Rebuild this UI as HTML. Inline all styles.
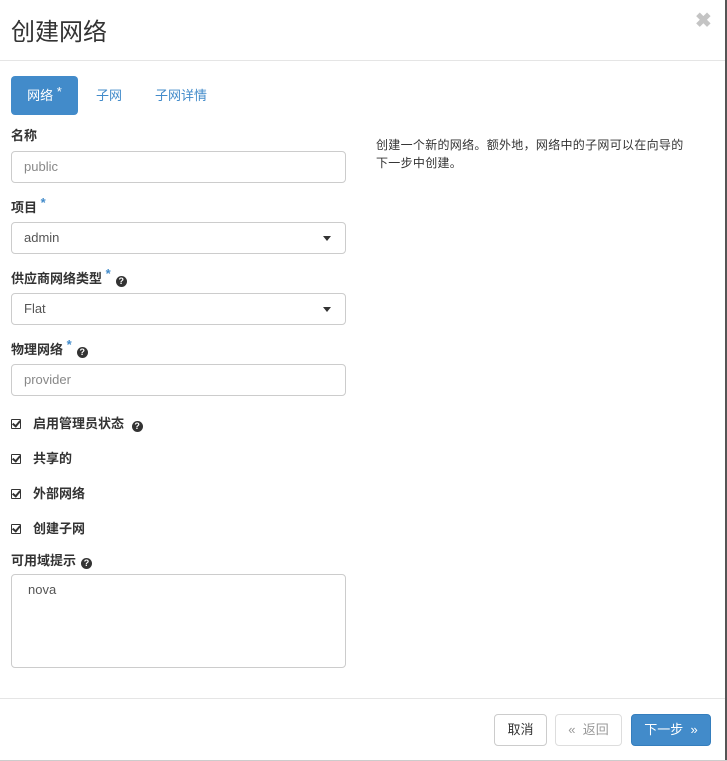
<!DOCTYPE html>
<html><head><meta charset="utf-8"><style>
*{box-sizing:border-box}
body{margin:0;width:727px;height:761px;background:#fff;font-family:"Liberation Sans","Noto Sans CJK SC",sans-serif;font-size:13px;color:#333;position:relative;overflow:hidden}
.edge{position:absolute;right:0;top:0;width:2px;height:761px;background:#555}
.edgeb{position:absolute;left:0;bottom:0;height:1px;width:727px;background:#ccc}
h1{position:absolute;left:11px;top:12px;margin:0;font-size:24px;font-weight:normal;color:#333}
.x{position:absolute;left:695px;top:8px;font-size:20px;color:#c4c4c4;font-weight:bold}
.hr{position:absolute;left:0;width:725px;height:1px;background:#e5e5e5}
.tab{position:absolute;top:76px;height:39px;line-height:39px;font-size:13px;color:#428bca}
.tab.a{left:11px;width:67px;background:#428bca;color:#fff;border-radius:4px;text-align:center}
.lbl{position:absolute;left:11px;font-weight:bold;font-size:13px;color:#333;line-height:16px}
.req{color:#428bca;font-size:13px;position:relative;top:-5px}
.q{display:inline-block;width:11px;height:11px;border-radius:50%;background:#333;color:#fff;font-size:9px;line-height:11px;text-align:center;font-weight:bold;margin-left:5px;vertical-align:-1px}
.inp{position:absolute;left:11px;width:335px;height:32px;border:1px solid #ccc;border-radius:4px;padding:0 12px;line-height:30px;color:#555;font-size:13px}
.inp.ph{color:#888}
.caret{position:absolute;right:14px;top:13px;width:0;height:0;border-left:4px solid transparent;border-right:4px solid transparent;border-top:5px solid #333}
.cb{position:absolute;left:11px;font-weight:bold;font-size:13px}
.cb .box{display:inline-block;width:10px;height:10px;border:1.5px solid #333;border-radius:1px;margin-right:12px;vertical-align:-1px;position:relative}
.cb .box:after{content:"";position:absolute;left:2px;top:-1px;width:3px;height:6px;border:solid #333;border-width:0 2px 2px 0;transform:rotate(40deg)}
.help{position:absolute;left:376px;top:136px;width:340px;line-height:18px;font-size:12px;color:#333;letter-spacing:0.3px}
.btn{position:absolute;top:714px;height:32px;border:1px solid #ccc;border-radius:4px;line-height:30px;text-align:center;font-size:13px;color:#333}
</style></head><body>
<div class="edge"></div><div class="edgeb"></div>
<h1>创建网络</h1><div class="x">✖</div>
<div class="hr" style="top:60px"></div>
<div class="tab a">网络 <span style="position:relative;top:-4px">*</span></div>
<div class="tab" style="left:96px">子网</div>
<div class="tab" style="left:155px">子网详情</div>
<div class="lbl" style="top:128px">名称</div>
<div class="inp ph" style="top:151px">public</div>
<div class="lbl" style="top:200px">项目 <span class="req">*</span></div>
<div class="inp" style="top:222px">admin<div class="caret"></div></div>
<div class="lbl" style="top:271px">供应商网络类型 <span class="req">*</span><span class="q">?</span></div>
<div class="inp" style="top:293px">Flat<div class="caret"></div></div>
<div class="lbl" style="top:342px">物理网络 <span class="req">*</span><span class="q">?</span></div>
<div class="inp ph" style="top:364px">provider</div>
<div class="cb" style="top:413px"><span class="box"></span>启用管理员状态 <span class="q" style="margin-left:4px">?</span></div>
<div class="cb" style="top:448px"><span class="box"></span>共享的</div>
<div class="cb" style="top:483px"><span class="box"></span>外部网络</div>
<div class="cb" style="top:518px"><span class="box"></span>创建子网</div>
<div class="lbl" style="top:553px">可用域提示<span class="q">?</span></div>
<div class="inp" style="top:574px;height:94px;padding:6px 16px;line-height:18px">nova</div>
<div class="help">创建一个新的网络。额外地，网络中的子网可以在向导的<br>下一步中创建。</div>
<div class="hr" style="top:698px"></div>
<div class="btn" style="left:494px;width:53px">取消</div>
<div class="btn" style="left:555px;width:67px;color:#999;border-color:#ddd">«&nbsp; 返回</div>
<div class="btn" style="left:631px;width:80px;background:#428bca;border-color:#357ebd;color:#fff">下一步 &nbsp;»</div>
</body></html>
